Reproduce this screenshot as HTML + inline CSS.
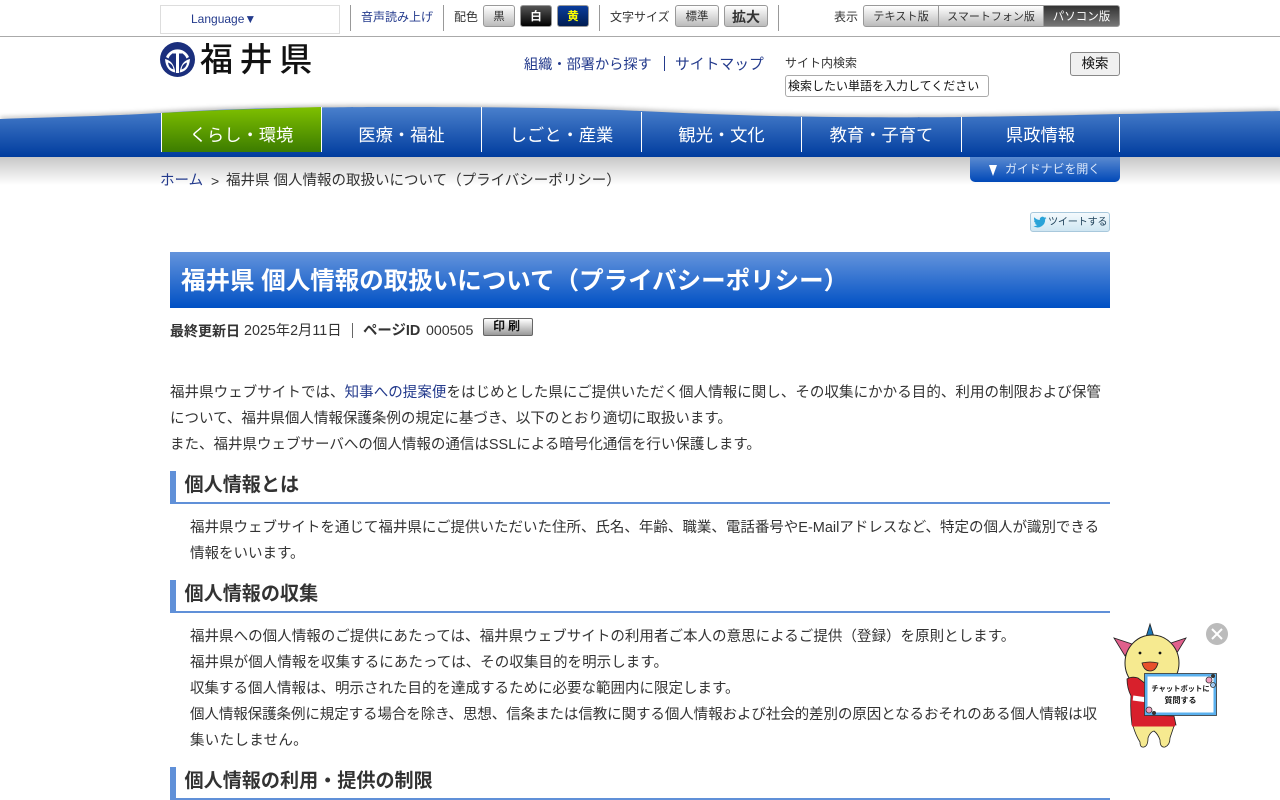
<!DOCTYPE html>
<html lang="ja"><head><meta charset="utf-8"><title>福井県 個人情報の取扱いについて</title>
<style>
*{box-sizing:border-box}
html,body{margin:0;padding:0;width:1280px;height:800px;overflow:hidden;background:#fff}
body{font-family:"Liberation Sans","Noto Sans CJK JP",sans-serif;color:#333;position:relative}
.a{position:absolute;white-space:nowrap}
a{color:#233a8c;text-decoration:none}
.sep{position:absolute;top:5px;width:1px;height:26px;background:#999}
.btn{position:absolute;top:5px;height:22px;border:1px solid #999;border-radius:3px;background:linear-gradient(#fff,#bbb);font-size:11.5px;line-height:23px;text-align:center;color:#333}
.nav{position:absolute;top:107px;width:160px;height:45px;border-left:1px solid #fff;color:#fff;font-size:17.3px;line-height:56px;text-align:center}
.p{position:absolute;font-size:14.5px;line-height:26px;white-space:nowrap;color:#333}
.p span{display:block}
.h{position:absolute;left:170px;width:940px;height:33px;border-left:6px solid #6090d8;border-bottom:2px solid #6090d8;font-size:19.1px;font-weight:bold;line-height:29px;padding-left:8.5px;color:#333}
</style></head><body>
<div class="a" style="left:160px;top:5px;width:180px;height:29px;border:1px solid #ddd;font-size:12px;line-height:27px;padding-left:30px;color:#233a8c">Language▼</div>
<div class="sep" style="left:350px"></div>
<a class="a" style="left:361px;top:9px;font-size:12px;line-height:16px">音声読み上げ</a>
<div class="sep" style="left:443px"></div>
<div class="a" style="left:454px;top:9px;font-size:12px;line-height:16px">配色</div>
<div class="btn" style="left:483px;width:32px">黒</div>
<div class="btn" style="left:520px;width:32px;background:linear-gradient(#555,#000);color:#fff;font-weight:bold">白</div>
<div class="btn" style="left:557px;width:32px;background:linear-gradient(#0a3c9c,#001c50);color:#ff0;font-weight:bold">黄</div>
<div class="sep" style="left:599px"></div>
<div class="a" style="left:610px;top:9px;font-size:12px;line-height:16px">文字サイズ</div>
<div class="btn" style="left:675px;width:44px">標準</div>
<div class="btn" style="left:724px;width:44px;font-size:14px;font-weight:bold">拡大</div>
<div class="sep" style="left:778px"></div>
<div class="a" style="left:834px;top:9px;font-size:12px;line-height:16px">表示</div>
<div class="btn" style="left:863px;width:76px;border-radius:3px 0 0 3px;font-size:11.2px">テキスト版</div>
<div class="btn" style="left:938px;width:106px;border-radius:0;font-size:11px">スマートフォン版</div>
<div class="btn" style="left:1043px;width:77px;border-radius:0 3px 3px 0;background:linear-gradient(#333,#777);color:#fff;font-size:11.5px">パソコン版</div>
<div class="a" style="left:0;top:36px;width:1280px;height:1px;background:#aaa"></div>

<svg class="a" style="left:160px;top:42px" width="35" height="35" viewBox="0 0 35 35">
<circle cx="17.5" cy="17.5" r="17.5" fill="#1b2f7d"/>
<path d="M6 15A12.500 12.500 0 0 1 29 15L26.500 16.500A9.500 9.500 0 0 0 8.500 16.500Z" fill="#fff"/>
<path d="M13 9H22V11.500H19V31H16V11.500H13Z" fill="#fff"/>
<path d="M5 17Q14 19 15.300 30.500Q6 29 5 17ZM30 17Q21 19 19.700 30.500Q29 29 30 17Z" fill="#fff"/>
<path d="M8 20.500Q13 22 13.500 27.500Q8.500 26 8 20.500ZM27 20.500Q22 22 21.500 27.500Q26.500 26 27 20.500Z" fill="#1b2f7d"/>
</svg>
<div class="a" style="left:200px;top:38px;font-size:33px;line-height:44px;letter-spacing:6.6px;color:#111;font-weight:500">福井県</div>

<a class="a" style="left:524px;top:55px;font-size:14.2px;line-height:20px">組織・部署から探す</a>
<div class="a" style="left:664px;top:56px;width:1px;height:15px;background:#233a8c"></div>
<a class="a" style="left:675px;top:55px;font-size:14.8px;line-height:20px">サイトマップ</a>
<div class="a" style="left:785px;top:54px;font-size:12px;line-height:18px">サイト内検索</div>
<div class="a" style="left:785px;top:75px;width:204px;height:22px;border:1px solid #aaa;border-radius:3px;font-size:12px;line-height:20px;padding-left:2px;color:#111">検索したい単語を入力してください</div>
<div class="a" style="left:1070px;top:52px;width:50px;height:24px;border:1px solid #888;border-radius:3px;background:#f0f0f0;font-size:13.5px;line-height:22px;text-align:center;color:#111">検索</div>

<svg class="a" style="left:0;top:98px" width="1280" height="90" viewBox="0 0 1280 90">
<defs>
<linearGradient id="g" x1="0" y1="0" x2="0" y2="1"><stop offset="0" stop-color="#4a80cc"/><stop offset="1" stop-color="#003c9e"/></linearGradient>
<linearGradient id="s" x1="0" y1="0" x2="0" y2="1"><stop offset="0" stop-color="#000" stop-opacity=".22"/><stop offset="1" stop-color="#000" stop-opacity="0"/></linearGradient>
<filter id="b" x="-5%" y="-50%" width="110%" height="200%"><feGaussianBlur stdDeviation="2"/></filter>
</defs>
<path d="M0 21C60 19 110 18 160 15C220 11 270 10 320 9.500C360 9 380 9 400 9C500 9 570 10 640 13C700 16 760 18 800 18.500C860 19.500 920 19.500 961 19C1030 18 1080 17 1120 16C1180 15 1230 14 1280 13V24H0Z" fill="#000" fill-opacity=".25" filter="url(#b)" transform="translate(0,-2)"/>
<rect y="59" width="1280" height="28" fill="url(#s)"/>
<path d="M0 21C60 19 110 18 160 15C220 11 270 10 320 9.500C360 9 380 9 400 9C500 9 570 10 640 13C700 16 760 18 800 18.500C860 19.500 920 19.500 961 19C1030 18 1080 17 1120 16C1180 15 1230 14 1280 13V59H0Z" fill="url(#g)"/>
</svg>
<div class="nav" style="left:161px;background:linear-gradient(#7fc000,#3c7c00);clip-path:polygon(0 6px,50px 3.500px,110px 1.500px,160px 0,160px 45px,0 45px)">くらし・環境</div>
<div class="nav" style="left:321px">医療・福祉</div>
<div class="nav" style="left:481px">しごと・産業</div>
<div class="nav" style="left:641px;clip-path:inset(5px 0 0 0)">観光・文化</div>
<div class="nav" style="left:801px;clip-path:inset(10px 0 0 0)">教育・子育て</div>
<div class="nav" style="left:961px;width:159px;border-right:1px solid #fff;clip-path:inset(10px 0 0 0)">県政情報</div>

<div class="a" style="left:970px;top:157px;width:150px;height:25px;border-radius:0 0 5px 5px;background:linear-gradient(#5a8ad0,#0048b8);color:#dce8fa;font-size:11.9px;line-height:25px;padding-left:35px">ガイドナビを開く</div>
<div class="a" style="left:989px;top:165px;width:0;height:0;border-left:4px solid transparent;border-right:4px solid transparent;border-top:11px solid #fff"></div>

<a class="a" style="left:160px;top:172px;font-size:14.5px;line-height:18px">ホーム</a>
<div class="a" style="left:211px;top:172px;font-size:14px;line-height:18px">&gt;</div>
<div class="a" style="left:226px;top:172px;font-size:14.5px;line-height:18px">福井県 個人情報の取扱いについて（プライバシーポリシー）</div>

<div class="a" style="left:1030px;top:212px;width:80px;height:20px;border:1px solid #a8c8dc;border-radius:3px;background:linear-gradient(#f4fafd,#cfe6f2);font-size:10.2px;line-height:19px;padding-left:17px;color:#24465e;letter-spacing:-.3px">ツイートする</div>
<svg class="a" style="left:1033px;top:215px" width="14" height="14" viewBox="0 0 24 24"><path d="M23 5c-.8.400-1.700.600-2.600.700.900-.600 1.600-1.400 2-2.400-.900.500-1.800.900-2.900 1.100A4.600 4.600 0 0 0 11.700 8.600C7.900 8.400 4.500 6.600 2.300 3.800c-1.200 2.100-.600 4.800 1.400 6.100-.700 0-1.400-.200-2.100-.600 0 2.200 1.600 4.100 3.700 4.600-.700.200-1.400.200-2.100.100.600 1.900 2.300 3.200 4.300 3.200A9.300 9.300 0 0 1 .700 19.100 13 13 0 0 0 20.800 7.500c.900-.600 1.600-1.500 2.200-2.500z" fill="#2aa3d8"/></svg>

<div class="a" style="left:170px;top:252px;width:940px;height:56px;background:linear-gradient(#6494dc,#0050c4);color:#fff;font-size:24.5px;font-weight:bold;line-height:60px;padding-left:11px">福井県 個人情報の取扱いについて（プライバシーポリシー）</div>

<b class="a" style="left:170px;top:321px;font-size:14px;line-height:20px">最終更新日</b>
<div class="a" style="left:244px;top:321px;font-size:14.3px;line-height:20px">2025年2月11日</div>
<div class="a" style="left:352px;top:323px;width:1px;height:15px;background:#666"></div>
<b class="a" style="left:363px;top:321px;font-size:14.4px;line-height:20px">ページID</b>
<div class="a" style="left:426px;top:321px;font-size:14.2px;line-height:20px">000505</div>
<div class="a" style="left:483px;top:318px;width:50px;height:18px;border:1px solid #666;border-radius:2px;background:linear-gradient(#fff,#999);font-size:12px;font-weight:bold;line-height:15px;text-align:center;color:#111;letter-spacing:3px">印刷</div>

<div class="p" style="left:170px;top:380px"><span style="letter-spacing:.05px">福井県ウェブサイトでは、<a>知事への提案便</a>をはじめとした県にご提供いただく個人情報に関し、その収集にかかる目的、利用の制限および保管</span><span>について、福井県個人情報保護条例の規定に基づき、以下のとおり適切に取扱います。</span><span>また、福井県ウェブサーバへの個人情報の通信はSSLによる暗号化通信を行い保護します。</span></div>
<div class="h" style="top:471px">個人情報とは</div>
<div class="p" style="left:190px;top:515px"><span style="letter-spacing:-.01px">福井県ウェブサイトを通じて福井県にご提供いただいた住所、氏名、年齢、職業、電話番号やE-Mailアドレスなど、特定の個人が識別できる</span><span>情報をいいます。</span></div>
<div class="h" style="top:580px">個人情報の収集</div>
<div class="p" style="left:190px;top:624px"><span style="letter-spacing:.03px">福井県への個人情報のご提供にあたっては、福井県ウェブサイトの利用者ご本人の意思によるご提供（登録）を原則とします。</span><span style="letter-spacing:.06px">福井県が個人情報を収集するにあたっては、その収集目的を明示します。</span><span>収集する個人情報は、明示された目的を達成するために必要な範囲内に限定します。</span><span style="letter-spacing:-.08px">個人情報保護条例に規定する場合を除き、思想、信条または信教に関する個人情報および社会的差別の原因となるおそれのある個人情報は収</span><span style="letter-spacing:.3px">集いたしません。</span></div>
<div class="h" style="top:767px">個人情報の利用・提供の制限</div>

<svg class="a" style="left:1110px;top:620px" width="120" height="132" viewBox="0 0 120 132">
<path d="M40 4L36 17H44Z" fill="#1b78b8" stroke="#222" stroke-width=".8"/>
<path d="M4 18L15 36L22 24Z" fill="#e0608c" stroke="#222" stroke-width=".8"/>
<path d="M76 18L65 36L58 24Z" fill="#e0608c" stroke="#222" stroke-width=".8"/>
<path d="M23 106Q26 116 30 122Q30 128 34 127Q38 126 38 118Q40 112 44 111Q48 114 50 120Q50 128 55 127Q60 125 60 118Q62 112 64 106Z" fill="#f6ea90" stroke="#222" stroke-width=".8"/>
<ellipse cx="42" cy="43" rx="27" ry="28" fill="#f6ea90" stroke="#222" stroke-width="1"/>
<circle cx="30" cy="33" r="1.400" fill="#111"/><circle cx="50" cy="33" r="1.400" fill="#111"/>
<path d="M32 43Q40 41 48 43Q46 51 40 51Q34 51 32 43Z" fill="#e8502c" stroke="#222" stroke-width=".8"/>
<path d="M17 59Q22 56 28 58L36 64V95L64 96L66 105H22Q20 90 21 76Q17 68 17 59Z" fill="#d8202c" stroke="#222" stroke-width=".8"/>
<path d="M23 78L38 80" stroke="#fff" stroke-width="5"/>
<path d="M22 105H65" stroke="#d8202c" stroke-width="3"/>
<circle cx="39" cy="78" r="3" fill="#f6ea90" stroke="#222" stroke-width=".6"/>
<rect x="36" y="55" width="69" height="39" fill="#fff" stroke="#5ab0ee" stroke-width="3"/>
<rect x="34.500" y="53.500" width="72" height="42" fill="none" stroke="#333" stroke-width=".8"/>
<circle cx="99" cy="60" r="3" fill="#f0a0c0" stroke="#333" stroke-width=".8"/><circle cx="103" cy="65" r="2.500" fill="#a0c8f0" stroke="#333" stroke-width=".8"/><circle cx="103" cy="56" r="2" fill="#333"/>
<circle cx="39" cy="90" r="3" fill="#f0a0c0" stroke="#333" stroke-width=".8"/><circle cx="44" cy="93" r="2" fill="#333"/>
<text x="70.500" y="71" font-size="7.300" font-weight="bold" text-anchor="middle" fill="#111" font-family="Liberation Sans,Noto Sans CJK JP,sans-serif">チャットボットに</text>
<text x="70.500" y="83" font-size="8" font-weight="bold" text-anchor="middle" fill="#111" font-family="Liberation Sans,Noto Sans CJK JP,sans-serif">質問する</text>
<circle cx="107" cy="14" r="11" fill="#bbb"/><path d="M102 9L112 19M112 9L102 19" stroke="#fff" stroke-width="2"/>
</svg>
</body></html>
